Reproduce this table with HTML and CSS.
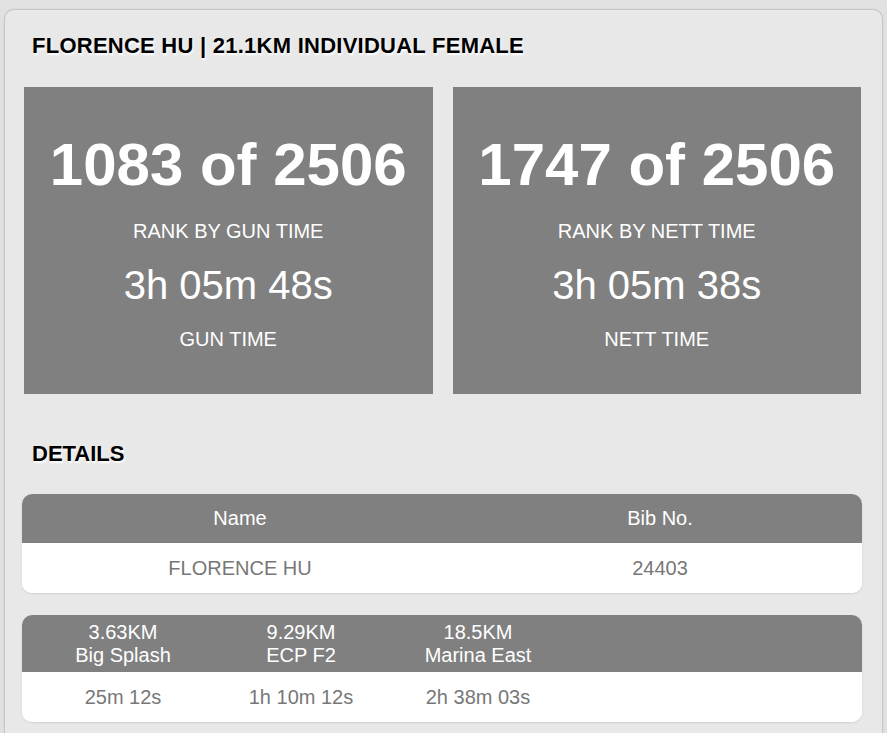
FILE: index.html
```html
<!DOCTYPE html>
<html>
<head>
<meta charset="utf-8">
<link rel="stylesheet" href="styles.css">
</head>
<body>
<div class="card">
  <h2 class="heading title">FLORENCE HU | 21.1KM INDIVIDUAL FEMALE</h2>
  <div class="ranks">
    <div class="rank-box">
      <div class="rank-num">1083 of 2506</div>
      <div class="rank-label">RANK BY GUN TIME</div>
      <div class="rank-time">3h 05m 48s</div>
      <div class="rank-label">GUN TIME</div>
    </div>
    <div class="rank-box">
      <div class="rank-num">1747 of 2506</div>
      <div class="rank-label">RANK BY NETT TIME</div>
      <div class="rank-time">3h 05m 38s</div>
      <div class="rank-label">NETT TIME</div>
    </div>
  </div>
  <h2 class="heading details">DETAILS</h2>
  <div class="tbl tbl-info">
    <div class="row head">
      <div class="cell">Name</div>
      <div class="cell">Bib No.</div>
    </div>
    <div class="row body">
      <div class="cell">FLORENCE HU</div>
      <div class="cell">24403</div>
    </div>
  </div>
  <div class="tbl tbl-splits">
    <div class="row head">
      <div class="cell">3.63KM<br>Big Splash</div>
      <div class="cell">9.29KM<br>ECP F2</div>
      <div class="cell">18.5KM<br>Marina East</div>
      <div class="cell"></div>
    </div>
    <div class="row body">
      <div class="cell">25m 12s</div>
      <div class="cell">1h 10m 12s</div>
      <div class="cell">2h 38m 03s</div>
      <div class="cell"></div>
    </div>
  </div>
</div>
</body>
</html>
```

FILE: styles.css
```css
html, body {
  margin: 0;
  padding: 0;
}
body {
  background: #e1e1e1;
  font-family: "Liberation Sans", Arial, sans-serif;
  height: 733px;
  overflow: hidden;
}
.card {
  margin: 9px 4px 0 4px;
  background: #e8e8e8;
  border: 1px solid #c6c6c6;
  border-radius: 10px;
  padding: 0 20px 40px 17px;
  box-shadow: 0 0 2px rgba(0,0,0,0.08);
}
.heading {
  margin: 0;
  font-size: 22px;
  line-height: 26px;
  font-weight: bold;
  color: #000;
  text-shadow: 1px 2px 2px rgba(255,255,255,0.95);
  padding-left: 10px;
}
.title {
  padding-top: 23px;
  letter-spacing: 0.25px;
}
.ranks {
  display: flex;
  gap: 20px;
  margin: 28px 1px 0 2px;
}
.rank-box {
  flex: 1;
  background: #808080;
  color: #fff;
  display: flex;
  flex-direction: column;
  align-items: center;
  gap: 19px;
  padding: 43px 0;
}
.rank-num {
  font-size: 60px;
  line-height: 70px;
  font-weight: bold;
}
.rank-label {
  font-size: 20px;
  line-height: 24px;
}
.rank-time {
  font-size: 40px;
  line-height: 46px;
}
.details {
  margin-top: 47px;
}
.tbl {
  border-radius: 10px;
  overflow: hidden;
  background: #fff;
  box-shadow: 0 1px 2px rgba(0,0,0,0.1);
}
.tbl-info {
  margin-top: 27px;
}
.tbl-splits {
  margin-top: 22px;
}
.row {
  display: grid;
  align-items: center;
  text-align: center;
  font-size: 20px;
}
.tbl-info .row {
  grid-template-columns: 436px 1fr;
}
.tbl-splits .row {
  grid-template-columns: 202px 154px 200px 1fr;
}
.head {
  background: #808080;
  color: #fff;
  line-height: 23px;
}
.body {
  background: #fff;
  color: #777;
  height: 50px;
}
.tbl-info .head {
  height: 49px;
}
.tbl-splits .head {
  height: 57px;
}
```
